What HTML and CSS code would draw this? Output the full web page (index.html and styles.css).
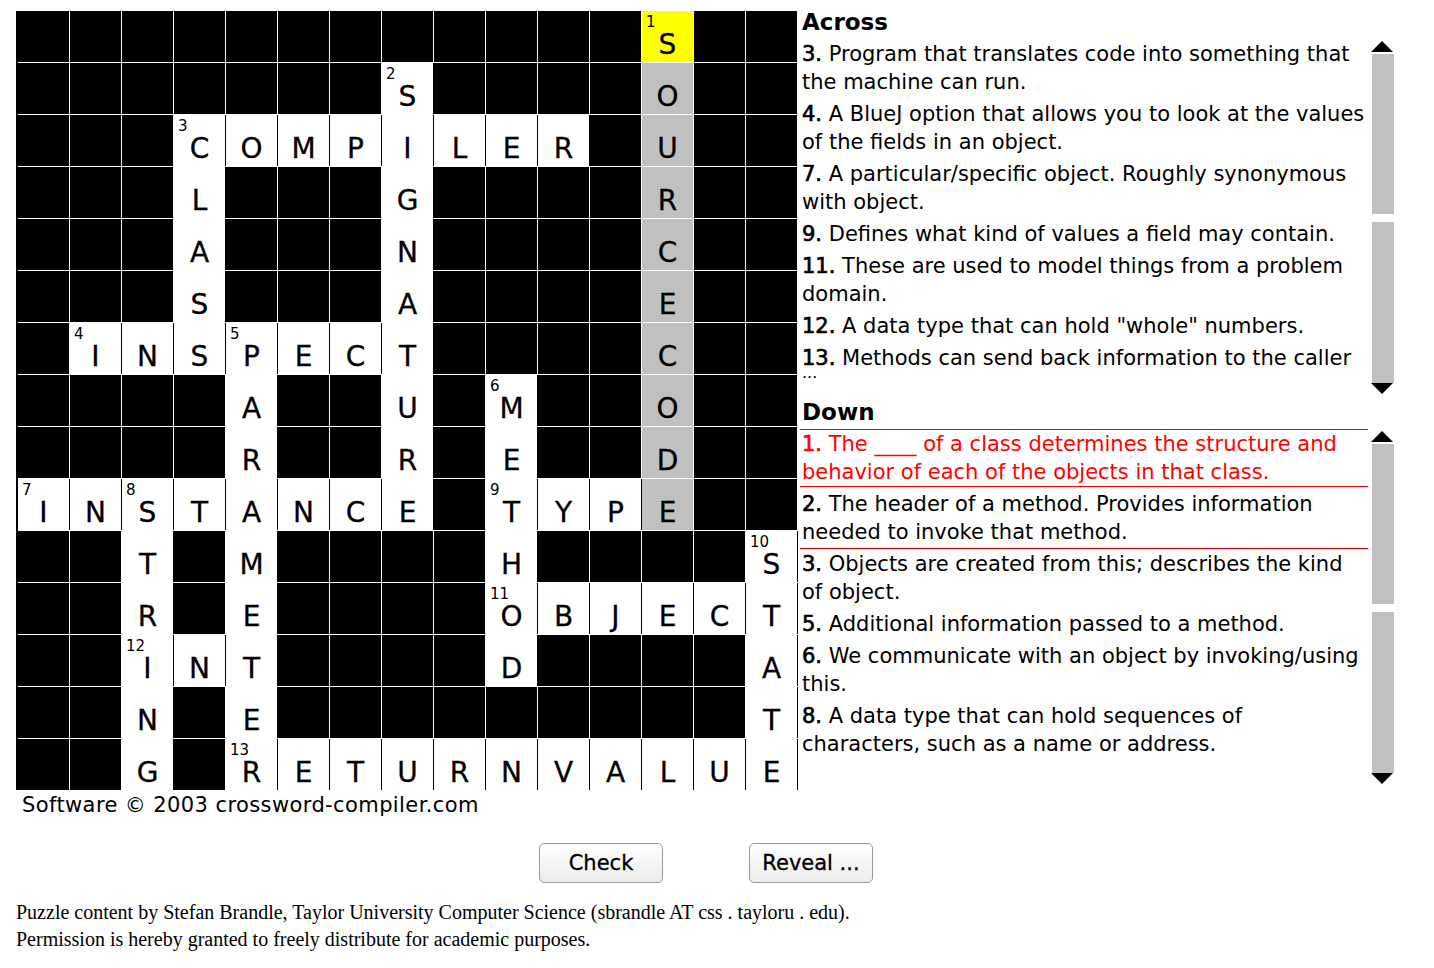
FILE: index.html
```html
<!DOCTYPE html>
<html>
<head>
<meta charset="utf-8">
<title>Crossword</title>
<link rel="stylesheet" href="styles.css">
</head>
<body>
<div class="applet">
  <div class="top">
    <div class="board">
      <div class="grid">
        <!-- row 0 -->
        <div class="k"></div><div class="k"></div><div class="k"></div><div class="k"></div><div class="k"></div><div class="k"></div><div class="k"></div><div class="k"></div><div class="k"></div><div class="k"></div><div class="k"></div><div class="k"></div><div class="y"><span class="n">1</span>S</div><div class="k"></div><div class="k"></div>
        <!-- row 1 -->
        <div class="k"></div><div class="k"></div><div class="k"></div><div class="k"></div><div class="k"></div><div class="k"></div><div class="k"></div><div class="w"><span class="n">2</span>S</div><div class="k"></div><div class="k"></div><div class="k"></div><div class="k"></div><div class="g">O</div><div class="k"></div><div class="k"></div>
        <!-- row 2 -->
        <div class="k"></div><div class="k"></div><div class="k"></div><div class="w"><span class="n">3</span>C</div><div class="w">O</div><div class="w">M</div><div class="w">P</div><div class="w">I</div><div class="w">L</div><div class="w">E</div><div class="w">R</div><div class="k"></div><div class="g">U</div><div class="k"></div><div class="k"></div>
        <!-- row 3 -->
        <div class="k"></div><div class="k"></div><div class="k"></div><div class="w">L</div><div class="k"></div><div class="k"></div><div class="k"></div><div class="w">G</div><div class="k"></div><div class="k"></div><div class="k"></div><div class="k"></div><div class="g">R</div><div class="k"></div><div class="k"></div>
        <!-- row 4 -->
        <div class="k"></div><div class="k"></div><div class="k"></div><div class="w">A</div><div class="k"></div><div class="k"></div><div class="k"></div><div class="w">N</div><div class="k"></div><div class="k"></div><div class="k"></div><div class="k"></div><div class="g">C</div><div class="k"></div><div class="k"></div>
        <!-- row 5 -->
        <div class="k"></div><div class="k"></div><div class="k"></div><div class="w">S</div><div class="k"></div><div class="k"></div><div class="k"></div><div class="w">A</div><div class="k"></div><div class="k"></div><div class="k"></div><div class="k"></div><div class="g">E</div><div class="k"></div><div class="k"></div>
        <!-- row 6 -->
        <div class="k"></div><div class="w"><span class="n">4</span>I</div><div class="w">N</div><div class="w">S</div><div class="w"><span class="n">5</span>P</div><div class="w">E</div><div class="w">C</div><div class="w">T</div><div class="k"></div><div class="k"></div><div class="k"></div><div class="k"></div><div class="g">C</div><div class="k"></div><div class="k"></div>
        <!-- row 7 -->
        <div class="k"></div><div class="k"></div><div class="k"></div><div class="k"></div><div class="w">A</div><div class="k"></div><div class="k"></div><div class="w">U</div><div class="k"></div><div class="w"><span class="n">6</span>M</div><div class="k"></div><div class="k"></div><div class="g">O</div><div class="k"></div><div class="k"></div>
        <!-- row 8 -->
        <div class="k"></div><div class="k"></div><div class="k"></div><div class="k"></div><div class="w">R</div><div class="k"></div><div class="k"></div><div class="w">R</div><div class="k"></div><div class="w">E</div><div class="k"></div><div class="k"></div><div class="g">D</div><div class="k"></div><div class="k"></div>
        <!-- row 9 -->
        <div class="w"><span class="n">7</span>I</div><div class="w">N</div><div class="w"><span class="n">8</span>S</div><div class="w">T</div><div class="w">A</div><div class="w">N</div><div class="w">C</div><div class="w">E</div><div class="k"></div><div class="w"><span class="n">9</span>T</div><div class="w">Y</div><div class="w">P</div><div class="g">E</div><div class="k"></div><div class="k"></div>
        <!-- row 10 -->
        <div class="k"></div><div class="k"></div><div class="w">T</div><div class="k"></div><div class="w">M</div><div class="k"></div><div class="k"></div><div class="k"></div><div class="k"></div><div class="w">H</div><div class="k"></div><div class="k"></div><div class="k"></div><div class="k"></div><div class="w"><span class="n">10</span>S</div>
        <!-- row 11 -->
        <div class="k"></div><div class="k"></div><div class="w">R</div><div class="k"></div><div class="w">E</div><div class="k"></div><div class="k"></div><div class="k"></div><div class="k"></div><div class="w"><span class="n">11</span>O</div><div class="w">B</div><div class="w">J</div><div class="w">E</div><div class="w">C</div><div class="w">T</div>
        <!-- row 12 -->
        <div class="k"></div><div class="k"></div><div class="w"><span class="n">12</span>I</div><div class="w">N</div><div class="w">T</div><div class="k"></div><div class="k"></div><div class="k"></div><div class="k"></div><div class="w">D</div><div class="k"></div><div class="k"></div><div class="k"></div><div class="k"></div><div class="w">A</div>
        <!-- row 13 -->
        <div class="k"></div><div class="k"></div><div class="w">N</div><div class="k"></div><div class="w">E</div><div class="k"></div><div class="k"></div><div class="k"></div><div class="k"></div><div class="k"></div><div class="k"></div><div class="k"></div><div class="k"></div><div class="k"></div><div class="w">T</div>
        <!-- row 14 -->
        <div class="k"></div><div class="k"></div><div class="w">G</div><div class="k"></div><div class="w"><span class="n">13</span>R</div><div class="w">E</div><div class="w">T</div><div class="w">U</div><div class="w">R</div><div class="w">N</div><div class="w">V</div><div class="w">A</div><div class="w">L</div><div class="w">U</div><div class="w">E</div>
      </div>
      <div class="caption">Software © 2003 crossword-compiler.com</div>
    </div>

    <div class="panel">
      <div class="heading">Across</div>
      <div class="clue-box">
        <div class="clue-list">
          <div class="clue"><span class="num">3.</span> Program that translates code into something that the machine can run.</div>
          <div class="clue"><span class="num">4.</span> A BlueJ option that allows you to look at the values of the fields in an object.</div>
          <div class="clue"><span class="num">7.</span> A particular/specific object. Roughly synonymous with object.</div>
          <div class="clue"><span class="num">9.</span> Defines what kind of values a field may contain.</div>
          <div class="clue"><span class="num">11.</span> These are used to model things from a problem domain.</div>
          <div class="clue"><span class="num">12.</span> A data type that can hold "whole" numbers.</div>
          <div class="clue"><span class="num">13.</span> Methods can send back information to the caller</div>
          <div class="more">...</div>
        </div>
        <div class="scrollbar">
          <svg class="arrow" width="22" height="12" viewBox="0 0 22 12"><polygon points="0,12 11,1 22,12" fill="#000"/></svg>
          <div class="thumb"></div>
          <div class="track"></div>
          <svg class="arrow" width="22" height="12" viewBox="0 0 22 12"><polygon points="0,0 22,0 11,11" fill="#000"/></svg>
        </div>
      </div>

      <div class="heading down">Down</div>
      <div class="clue-box">
        <div class="clue-list">
          <div class="clue selected"><span class="num">1.</span> The ____ of a class determines the structure and behavior of each of the objects in that class.</div>
          <div class="clue sep"><span class="num">2.</span> The header of a method. Provides information needed to invoke that method.</div>
          <div class="clue"><span class="num">3.</span> Objects are created from this; describes the kind of object.</div>
          <div class="clue"><span class="num">5.</span> Additional information passed to a method.</div>
          <div class="clue"><span class="num">6.</span> We communicate with an object by invoking/using this.</div>
          <div class="clue"><span class="num">8.</span> A data type that can hold sequences of characters,&nbsp;such as a name or address.</div>
        </div>
        <div class="scrollbar">
          <svg class="arrow" width="22" height="12" viewBox="0 0 22 12"><polygon points="0,12 11,1 22,12" fill="#000"/></svg>
          <div class="thumb"></div>
          <div class="track"></div>
          <svg class="arrow" width="22" height="12" viewBox="0 0 22 12"><polygon points="0,0 22,0 11,11" fill="#000"/></svg>
        </div>
      </div>
    </div>
  </div>

  <div class="buttons">
    <button class="btn">Check</button>
    <button class="btn">Reveal ...</button>
  </div>

  <div class="footer">
    <div>Puzzle content by Stefan Brandle, Taylor University Computer Science (sbrandle AT css . tayloru . edu).</div>
    <div>Permission is hereby granted to freely distribute for academic purposes.</div>
  </div>
</div>
</body>
</html>
```

FILE: styles.css
```css
body {
  margin: 0;
  background: #fff;
  color: #000;
  font-family: "DejaVu Sans", sans-serif;
}

.applet {
  width: 1380px;
  padding: 11px 0 0 16px;
}

.top {
  display: flex;
  align-items: flex-start;
}

.board {
  display: flex;
  flex-direction: column;
}

.grid {
  display: grid;
  grid-template-columns: repeat(15, 51px);
  grid-auto-rows: 51px;
  gap: 1px;
  background: #fff;
  border-left: 2px solid #000;
  width: fit-content;
}

.grid > div {
  position: relative;
  box-sizing: border-box;
  padding-top: 20px;
  font-size: 28px;
  line-height: 28px;
  text-align: center;
  -webkit-text-stroke: 0.3px #000;
}

.k { background: #000; }
.w { background: #fff; box-shadow: 1px 0 0 #000; }
.g { background: #c0c0c0; }
.y { background: #ffff00; }

.n {
  position: absolute;
  top: 4px;
  left: 4px;
  font-size: 15px;
  line-height: 15px;
  -webkit-text-stroke: 0;
}

.caption {
  font-size: 21px;
  line-height: 30px;
  padding-left: 6px;
  letter-spacing: 0.4px;
  white-space: nowrap;
}

.panel {
  margin-left: 3px;
  width: 594px;
}

.heading {
  font-weight: bold;
  font-size: 23px;
  line-height: 22px;
  padding: 0 0 5px 2px;
}

.heading.down {
  padding-top: 6px;
}

.clue-box {
  display: flex;
  height: 357px;
}

.clue-list {
  width: 568px;
  padding-top: 2px;
  overflow: hidden;
}

.clue {
  font-size: 21px;
  line-height: 28px;
  padding: 0 0 0 2px;
  margin-bottom: 4px;
}

.num {
  -webkit-text-stroke: 0.7px currentColor;
}

.clue.selected {
  color: #f00;
  outline: 1px solid #f00;
}

.clue.sep {
  padding-bottom: 2px;
  border-bottom: 1px solid #d00;
  margin-bottom: 1px;
}

.more {
  font-size: 16px;
  line-height: 10px;
  height: 10px;
  margin-top: -8px;
  padding-left: 2px;
}

.scrollbar {
  margin-left: 4px;
  width: 22px;
  display: flex;
  flex-direction: column;
  padding-top: 2px;
}

.arrow {
  display: block;
  margin-left: -1px;
  flex: none;
}

.thumb {
  background: #c0c0c0;
  height: 160px;
  margin-top: 2px;
}

.track {
  background: #c0c0c0;
  flex: 1;
  margin-top: 8px;
}

.buttons {
  display: flex;
  justify-content: center;
  gap: 86px;
  margin-top: 23px;
}

.btn {
  width: 124px;
  height: 40px;
  border: 1px solid #9a9a9a;
  border-radius: 5px;
  background: linear-gradient(#ffffff, #ebebeb);
  font-family: "DejaVu Sans", sans-serif;
  font-size: 21px;
  color: #000;
  padding: 0;
  -webkit-text-stroke: 0.3px #000;
}

.footer {
  margin-top: 16px;
  font-family: "Liberation Serif", serif;
  font-size: 20px;
  line-height: 27px;
}
```
